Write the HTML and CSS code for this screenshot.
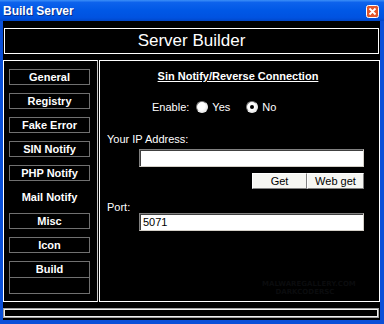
FILE: index.html
```html
<!DOCTYPE html>
<html>
  <head>
    <meta charset="utf-8">
    <title>Build Server</title>
    <link rel="stylesheet" href="styles.css">
  </head>
  <body>
  <div id="window">
    <div class="titlebar">
      <span class="title">Build Server</span>
      <span class="close">
        <svg width="13" height="13" viewBox="0 0 13 13">
          <rect x="0.5" y="0.5" width="12" height="12" rx="2" fill="#e2562b" stroke="#fff"/>
          <path d="M3.5 3.5 L9.5 9.5 M9.5 3.5 L3.5 9.5" stroke="#fff" stroke-width="1.8"/>
        </svg>
      </span>
    </div>
    <div class="client">
      <div class="banner">Server Builder</div>
      <div class="main">
        <ul class="nav">
          <li class="nav-item">General</li>
          <li class="nav-item">Registry</li>
          <li class="nav-item">Fake Error</li>
          <li class="nav-item">SIN Notify</li>
          <li class="nav-item">PHP Notify</li>
          <li class="nav-item active">Mail Notify</li>
          <li class="nav-item">Misc</li>
          <li class="nav-item">Icon</li>
          <li class="nav-group">
            <div class="nav-sub">Build</div>
            <div class="nav-sub"></div>
          </li>
        </ul>
        <div class="panel">
          <div class="panel-title">Sin Notify/Reverse Connection</div>
          <div class="enable-row">
            <span>Enable:</span>
            <span class="radio"></span><span>Yes</span>
            <span class="radio checked"></span><span>No</span>
          </div>
          <div class="label ip-label">Your IP Address:</div>
          <div class="field"></div>
          <div class="btn-row">
            <span class="btn get">Get</span>
            <span class="btn webget">Web get</span>
          </div>
          <div class="label port-label">Port:</div>
          <div class="field">5071</div>
          <div class="watermark">
            <div>MALWAREGALLERY.COM</div>
            <div>DARKCODERSC</div>
          </div>
        </div>
      </div>
      <div class="status"></div>
    </div>
  </div>
  </body>
</html>
```

FILE: styles.css
```css
      body {
        margin: 0;
        padding: 0;
        font-family: 'Liberation Sans', Arial, sans-serif;
        font-size: 11px;
        color: #fff;
        background-color: #000;
      }
      #window {
        width: 384px;
        height: 324px;
        background-color: #0a4fd8;
        box-sizing: border-box;
        padding: 0 4px 4px 3px;
      }
      .titlebar {
        height: 21px;
        margin: 0 -4px 0 -3px;
        padding: 0 5px 0 3px;
        display: flex;
        align-items: center;
        justify-content: space-between;
        background: linear-gradient(#3c8ff8 0%, #0d62ec 12%, #0058e6 50%, #0052e0 85%, #0046c8 100%);
      }
      .title {
        font-weight: bold;
        font-size: 12px;
        text-shadow: 1px 1px 0 #0a2f8a;
      }
      .close {
        display: flex;
        margin-top: 1px;
      }
      .client {
        height: 299px;
        background-color: #000;
        padding-top: 7px;
        box-sizing: border-box;
      }
      .banner {
        height: 26px;
        margin: 0 1px;
        box-sizing: border-box;
        border: 1px solid #fff;
        font-size: 17px;
        line-height: 23px;
        text-align: center;
      }
      .main {
        display: flex;
        gap: 1px;
        margin-top: 6px;
        height: 242px;
      }
      .nav {
        width: 95px;
        margin: 0;
        padding: 8px 0 0 5px;
        box-sizing: border-box;
        border: 1px solid #fff;
        border-right-color: #c8c8c8;
        list-style-type: none;
      }
      .nav-item {
        width: 81px;
        height: 16px;
        margin-bottom: 8px;
        box-sizing: border-box;
        border: 1px solid #707070;
        font-weight: bold;
        line-height: 14px;
        text-align: center;
      }
      .nav-item.active {
        border-color: transparent;
      }
      .nav-group {
        width: 81px;
        box-sizing: border-box;
        border: 1px solid #707070;
      }
      .nav-sub {
        height: 15px;
        font-weight: bold;
        line-height: 15px;
        text-align: center;
      }
      .nav-sub:first-child {
        height: 16px;
        border-bottom: 1px solid #707070;
        box-sizing: border-box;
      }
      .panel {
        position: relative;
        width: 281px;
        box-sizing: border-box;
        border: 1px solid #fff;
        padding: 9px 15px 0 0;
        line-height: 12px;
      }
      .panel-title {
        font-weight: bold;
        text-decoration: underline;
        text-align: center;
        padding-left: 12px;
      }
      .enable-row {
        display: flex;
        align-items: center;
        margin-top: 19px;
        padding-left: 52px;
        height: 12px;
      }
      .enable-row span:first-child {
        margin-right: 7px;
      }
      .radio {
        width: 12px;
        height: 12px;
        box-sizing: border-box;
        border-radius: 50%;
        border: 1px solid;
        border-color: #808080 #f0f0f0 #f0f0f0 #808080;
        background: radial-gradient(circle at 40% 40%, #fff 45%, #d8d8d8 100%);
        margin-right: 4px;
        display: flex;
        align-items: center;
        justify-content: center;
      }
      .radio + span {
        margin-right: 16px;
      }
      .radio.checked::after {
        content: "";
        width: 4px;
        height: 4px;
        border-radius: 50%;
        background-color: #000;
      }
      .label {
        padding-left: 7px;
      }
      .ip-label {
        margin-top: 20px;
      }
      .port-label {
        margin-top: 12px;
      }
      .field {
        margin: 0 0 0 39px;
        height: 18px;
        box-sizing: border-box;
        border: 1px solid;
        border-color: #808080 #d4d0c8 #d4d0c8 #808080;
        box-shadow: inset 1px 1px 0 #404040;
        background-color: #fff;
        color: #000;
        padding: 0 3px;
        line-height: 16px;
      }
      .ip-label + .field {
        margin-top: 4px;
      }
      .btn-row {
        display: flex;
        justify-content: flex-end;
        margin-top: 6px;
      }
      .btn {
        height: 16px;
        box-sizing: border-box;
        background-color: #f6f6f2;
        color: #000;
        border: 1px solid;
        border-color: #fff #808080 #808080 #fff;
        text-align: center;
        line-height: 14px;
      }
      .get {
        width: 55px;
      }
      .webget {
        width: 57px;
      }
      .watermark {
        position: absolute;
        left: 162px;
        top: 219px;
        width: 86px;
        text-align: center;
        font-family: 'DejaVu Sans', sans-serif;
        font-weight: bold;
        font-size: 7px;
        line-height: 8px;
        color: #0b0c0e;
      }
      .status {
        margin: 6px 1px 0 0;
        height: 10px;
        box-sizing: border-box;
        border: 1px solid #a0a0a0;
        box-shadow: inset 0 0 0 1px #f0f0f0;
      }
```
